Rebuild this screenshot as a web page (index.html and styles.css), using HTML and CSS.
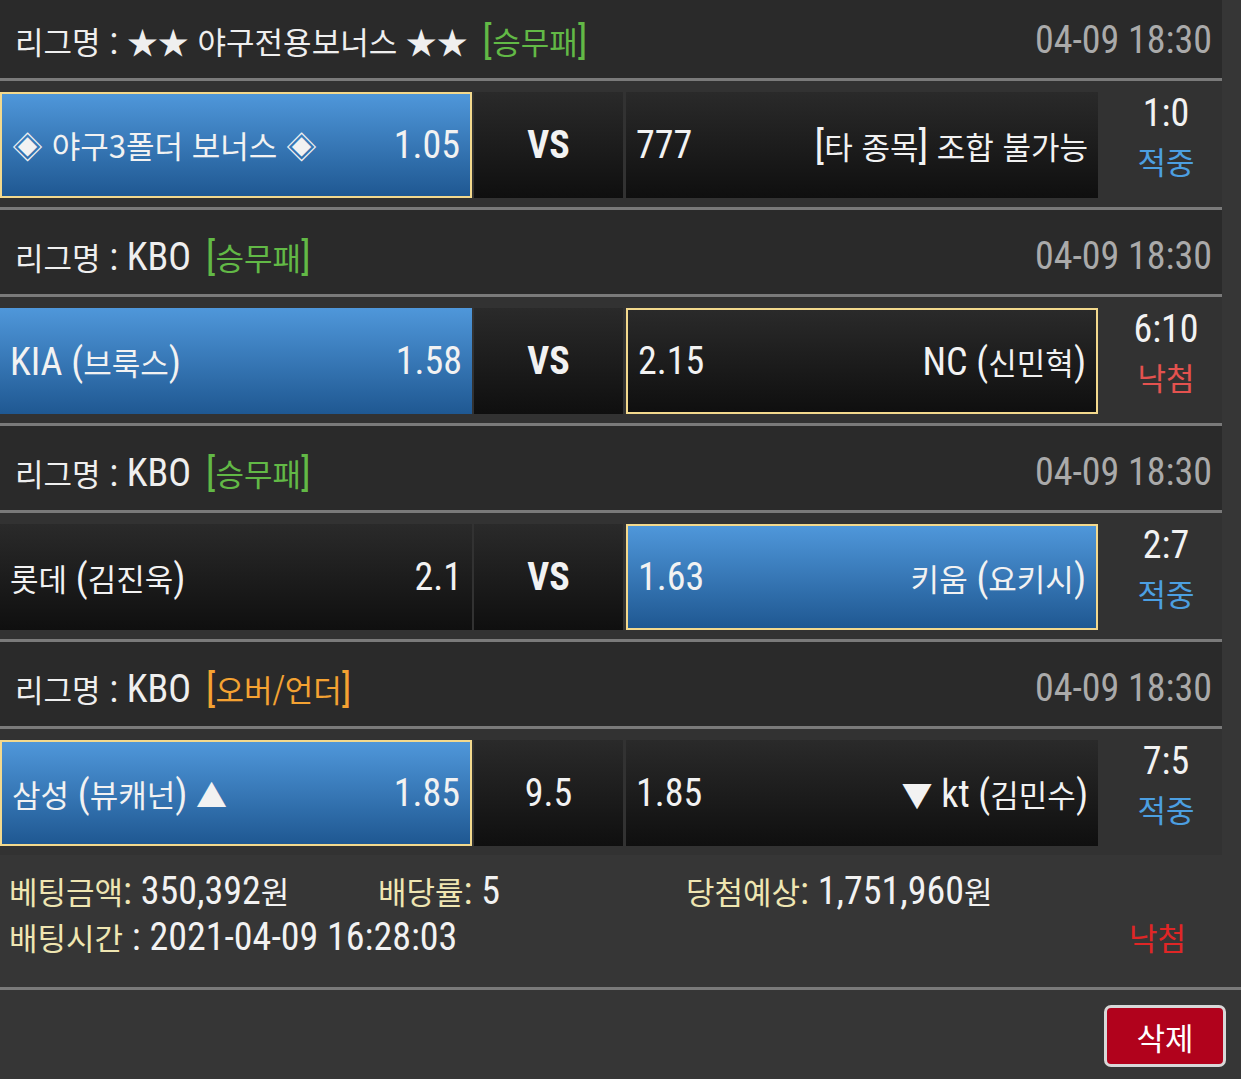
FILE: index.html
```html
<!DOCTYPE html>
<html lang="ko">
<head>
  <meta charset="UTF-8" />
  <meta name="viewport" content="width=device-width, initial-scale=1.0"/>
  <title>배팅내역</title>
  <link rel="stylesheet" href="styles.css">
</head>
<body>
  <div class="games">

    <div class="game">
      <div class="league">
        <div class="league-name"><span class="k">리그명</span> : <span class="k">★★ 야구전용보너스 ★★</span> <span class="type green">[<span class="k">승무패</span>]</span></div>
        <div class="league-time">04-09 18:30</div>
      </div>
      <div class="match">
        <div class="pick blue picked"><span class="k">◈ 야구3폴더 보너스 ◈</span><span>1.05</span></div>
        <div class="pick mid vs">VS</div>
        <div class="pick"><span>777</span><span>[<span class="k">타 종목</span>] <span class="k">조합 불가능</span></span></div>
        <div class="result"><div>1:0</div><div class="k hit">적중</div></div>
      </div>
    </div>

    <div class="game">
      <div class="league">
        <div class="league-name"><span class="k">리그명</span> : KBO <span class="type green">[<span class="k">승무패</span>]</span></div>
        <div class="league-time">04-09 18:30</div>
      </div>
      <div class="match">
        <div class="pick blue"><span>KIA (<span class="k">브룩스</span>)</span><span>1.58</span></div>
        <div class="pick mid vs">VS</div>
        <div class="pick picked"><span>2.15</span><span>NC (<span class="k">신민혁</span>)</span></div>
        <div class="result"><div>6:10</div><div class="k lose">낙첨</div></div>
      </div>
    </div>

    <div class="game">
      <div class="league">
        <div class="league-name"><span class="k">리그명</span> : KBO <span class="type green">[<span class="k">승무패</span>]</span></div>
        <div class="league-time">04-09 18:30</div>
      </div>
      <div class="match">
        <div class="pick"><span><span class="k">롯데</span> (<span class="k">김진욱</span>)</span><span>2.1</span></div>
        <div class="pick mid vs">VS</div>
        <div class="pick blue picked"><span>1.63</span><span><span class="k">키움</span> (<span class="k">요키시</span>)</span></div>
        <div class="result"><div>2:7</div><div class="k hit">적중</div></div>
      </div>
    </div>

    <div class="game">
      <div class="league">
        <div class="league-name"><span class="k">리그명</span> : KBO <span class="type orange">[<span class="k">오버/언더</span>]</span></div>
        <div class="league-time">04-09 18:30</div>
      </div>
      <div class="match">
        <div class="pick blue picked"><span><span class="k">삼성</span> (<span class="k">뷰캐넌</span>) <span class="k">▲</span></span><span>1.85</span></div>
        <div class="pick mid">9.5</div>
        <div class="pick"><span>1.85</span><span><span class="k">▼</span> kt (<span class="k">김민수</span>)</span></div>
        <div class="result"><div>7:5</div><div class="k hit">적중</div></div>
      </div>
    </div>

  </div>

  <div class="summary">
    <div><span class="label"><span class="k">베팅금액</span>:</span> 350,392<span class="k">원</span></div>
    <div><span class="label"><span class="k">배당률</span>:</span> 5</div>
    <div><span class="label"><span class="k">당첨예상</span>:</span> 1,751,960<span class="k">원</span></div>
    <div class="wide"><span class="label k">배팅시간</span> : 2021-04-09 16:28:03</div>
    <div class="k total-lose">낙첨</div>
  </div>

  <div class="actions">
    <button class="btn-del k">삭제</button>
  </div>
</body>
</html>
```

FILE: styles.css
```css
* {
  margin: 0;
  padding: 0;
  box-sizing: border-box;
}

body {
  background: #363636;
  color: #f2f2f2;
  font-family: "Roboto Condensed", "Roboto", "Noto Sans CJK KR", sans-serif;
  font-stretch: 85%;
  font-size: 38px;
  overflow: hidden;
}

/* korean runs are set smaller than the latin text */
.k {
  font-family: "Noto Sans CJK KR", sans-serif;
  font-size: 31px;
}

.games {
  width: 1222px;
  margin-top: -6px;
}

.game + .game {
  border-top: 3px solid #7a7a7a;
}

.league {
  height: 87px;
  display: flex;
  align-items: center;
  justify-content: space-between;
  padding: 8px 10px 0 15px;
  background: #2a2a2a;
  border-bottom: 3px solid #7a7a7a;
  white-space: nowrap;
}

.league-name { color: #efefef; }
.type { margin-left: 6px; }
.green { color: #62b946; }
.orange { color: #f4a232; }
.league-time { color: #aaaaaa; }

.match {
  height: 126px;
  display: flex;
  padding: 11px 0 9px;
  background: #323232;
}

.pick {
  width: 472px;
  display: flex;
  align-items: center;
  justify-content: space-between;
  padding: 0 10px;
  white-space: nowrap;
  background: linear-gradient(#2a2a2a, #0f0f0f);
}

.pick.blue {
  background: linear-gradient(#4f97da, #1f5892);
}

.pick.picked {
  border: 2px solid #f3d98d;
}

.mid {
  width: 149px;
  margin: 0 3px 0 2px;
  justify-content: center;
}

.vs { font-weight: bold; }

.result {
  flex: 1;
  display: flex;
  flex-direction: column;
  align-items: center;
  justify-content: center;
  line-height: 48px;
  padding: 0 0 16px 12px;
}

.hit { color: #4c9fe1; }
.lose { color: #e4524f; }

.summary {
  display: grid;
  grid-template-columns: 369px 308px 1fr;
  grid-auto-rows: 46px;
  align-items: center;
  padding: 12px 0 28px 9px;
  border-bottom: 3px solid #7a7a7a;
  white-space: nowrap;
}

.label { color: #efe6b2; }

.wide { grid-column: span 2; }

.total-lose {
  justify-self: end;
  margin-right: 55px;
  color: #e02626;
}

.actions {
  display: flex;
  justify-content: flex-end;
  padding: 15px 15px 0;
}

.btn-del {
  width: 122px;
  height: 62px;
  background: #b1021c;
  border: 3px solid #d8d8d8;
  border-radius: 7px;
  color: #fff;
}
```
